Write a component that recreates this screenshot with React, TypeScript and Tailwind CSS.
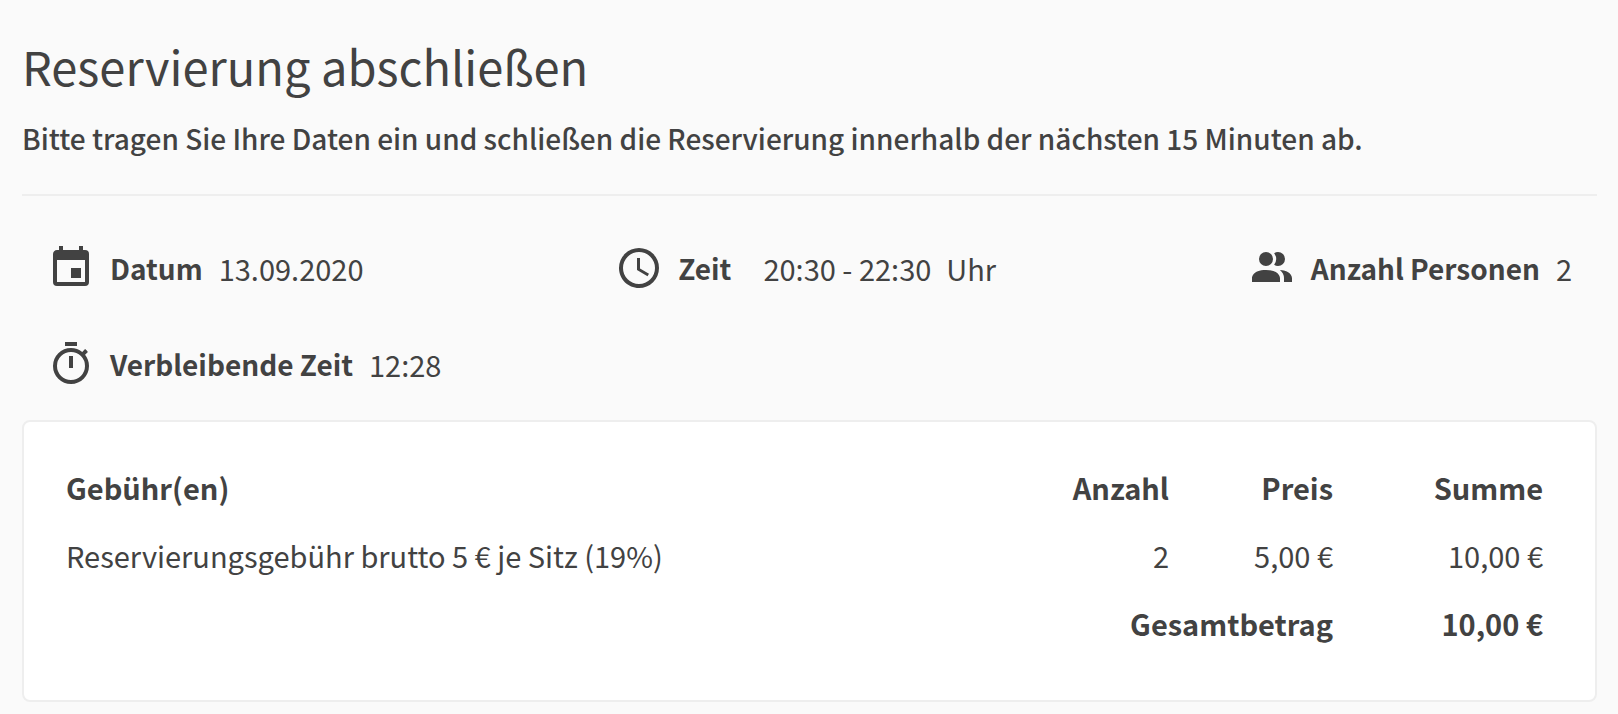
import type { ReactNode } from 'react';

const icons = {
  calendar:
    'M19 19H5V8H19M19 3H18V1H16V3H8V1H6V3H5C3.89 3 3 3.9 3 5V19A2 2 0 0 0 5 21H19A2 2 0 0 0 21 19V5A2 2 0 0 0 19 3M17 12H12V17H17V12Z',
  clock:
    'M12 20A8 8 0 0 0 20 12A8 8 0 0 0 12 4A8 8 0 0 0 4 12A8 8 0 0 0 12 20M12 2A10 10 0 0 1 22 12A10 10 0 0 1 12 22C6.47 22 2 17.5 2 12A10 10 0 0 1 12 2M12.5 7V12.25L17 14.92L16.25 16.15L11 13V7H12.5Z',
  people:
    'M16 17V19H2V17S2 13 9 13 16 17 16 17M12.5 7.5A3.5 3.5 0 1 0 9 11A3.5 3.5 0 0 0 12.5 7.5M15.94 13A5.32 5.32 0 0 1 18 17V19H22V17S22 13.37 15.94 13M15 4A3.39 3.39 0 0 0 13.07 4.59A5 5 0 0 1 13.07 10.41A3.39 3.39 0 0 0 15 11A3.5 3.5 0 0 0 15 4Z',
  timer:
    'M12 20A7 7 0 0 1 5 13A7 7 0 0 1 12 6A7 7 0 0 1 19 13A7 7 0 0 1 12 20M19.03 7.39L20.45 5.97C20 5.46 19.55 5 19.04 4.56L17.62 6C16.07 4.74 14.12 4 12 4A9 9 0 0 0 3 13A9 9 0 0 0 12 22C17 22 21 17.97 21 13C21 10.88 20.26 8.93 19.03 7.39M11 14H13V8H11M15 1H9V3H15V1Z',
};

const fees = [
  { name: 'Reservierungsgebühr brutto 5 € je Sitz (19%)', count: 2, price: '5,00 €', sum: '10,00 €' },
];

interface InfoItemProps {
  icon: keyof typeof icons;
  label: string;
  children: ReactNode;
}

function InfoItem({ icon, label, children }: InfoItemProps) {
  return (
    <div className="flex items-center">
      <dt className="mr-4 flex items-center gap-[15px] text-[28px] font-bold">
        <svg viewBox="0 0 24 24" className="size-12 fill-current" aria-hidden="true">
          <path d={icons[icon]} />
        </svg>
        {label}
      </dt>
      <dd className="flex gap-[15px]">{children}</dd>
    </div>
  );
}

export default function App() {
  return (
    <main className="min-h-screen bg-[#fafafa] pt-9 pr-[21px] pb-3 pl-[22px] font-['Noto_Sans_CJK_SC',sans-serif] text-[29px] leading-[48px] text-[#424242]">
      <header className="border-b-2 border-[#eeeeee] pb-8">
        <h1 className="text-[47px] leading-[60px]">Reservierung abschließen</h1>
        <p className="mt-[18px] text-[28px] font-medium">
          Bitte tragen Sie Ihre Daten ein und schließen die Reservierung innerhalb der nächsten 15 Minuten ab.
        </p>
      </header>

      <dl className="flex flex-wrap justify-between gap-12 px-[25px] pt-12 pb-8">
        <InfoItem icon="calendar" label="Datum">13.09.2020</InfoItem>
        <InfoItem icon="clock" label="Zeit">
          <span className="pl-4">20:30 - 22:30</span>
          <span>Uhr</span>
        </InfoItem>
        <InfoItem icon="people" label="Anzahl Personen">2</InfoItem>
        <InfoItem icon="timer" label="Verbleibende Zeit">12:28</InfoItem>
      </dl>

      <section className="rounded-lg border-2 border-[#eeeeee] bg-white pt-[31px] pr-10 pb-[43px] pl-[30px]">
        <table className="w-full table-fixed">
          <thead>
            <tr className="h-[68px]">
              <th className="px-3 text-left">Gebühr(en)</th>
              <th className="w-[164px] px-3 text-right">Anzahl</th>
              <th className="w-[164px] px-3 text-right">Preis</th>
              <th className="w-[210px] px-3 text-right">Summe</th>
            </tr>
          </thead>
          <tbody>
            {fees.map((fee) => (
              <tr key={fee.name} className="h-[68px]">
                <td className="px-3">{fee.name}</td>
                <td className="px-3 text-right">{fee.count}</td>
                <td className="px-3 text-right">{fee.price}</td>
                <td className="px-3 text-right">{fee.sum}</td>
              </tr>
            ))}
          </tbody>
          <tfoot>
            <tr className="h-[68px]">
              <th colSpan={3} className="px-3 text-right">Gesamtbetrag</th>
              <td className="px-3 text-right font-bold">10,00 €</td>
            </tr>
          </tfoot>
        </table>
      </section>
    </main>
  );
}
